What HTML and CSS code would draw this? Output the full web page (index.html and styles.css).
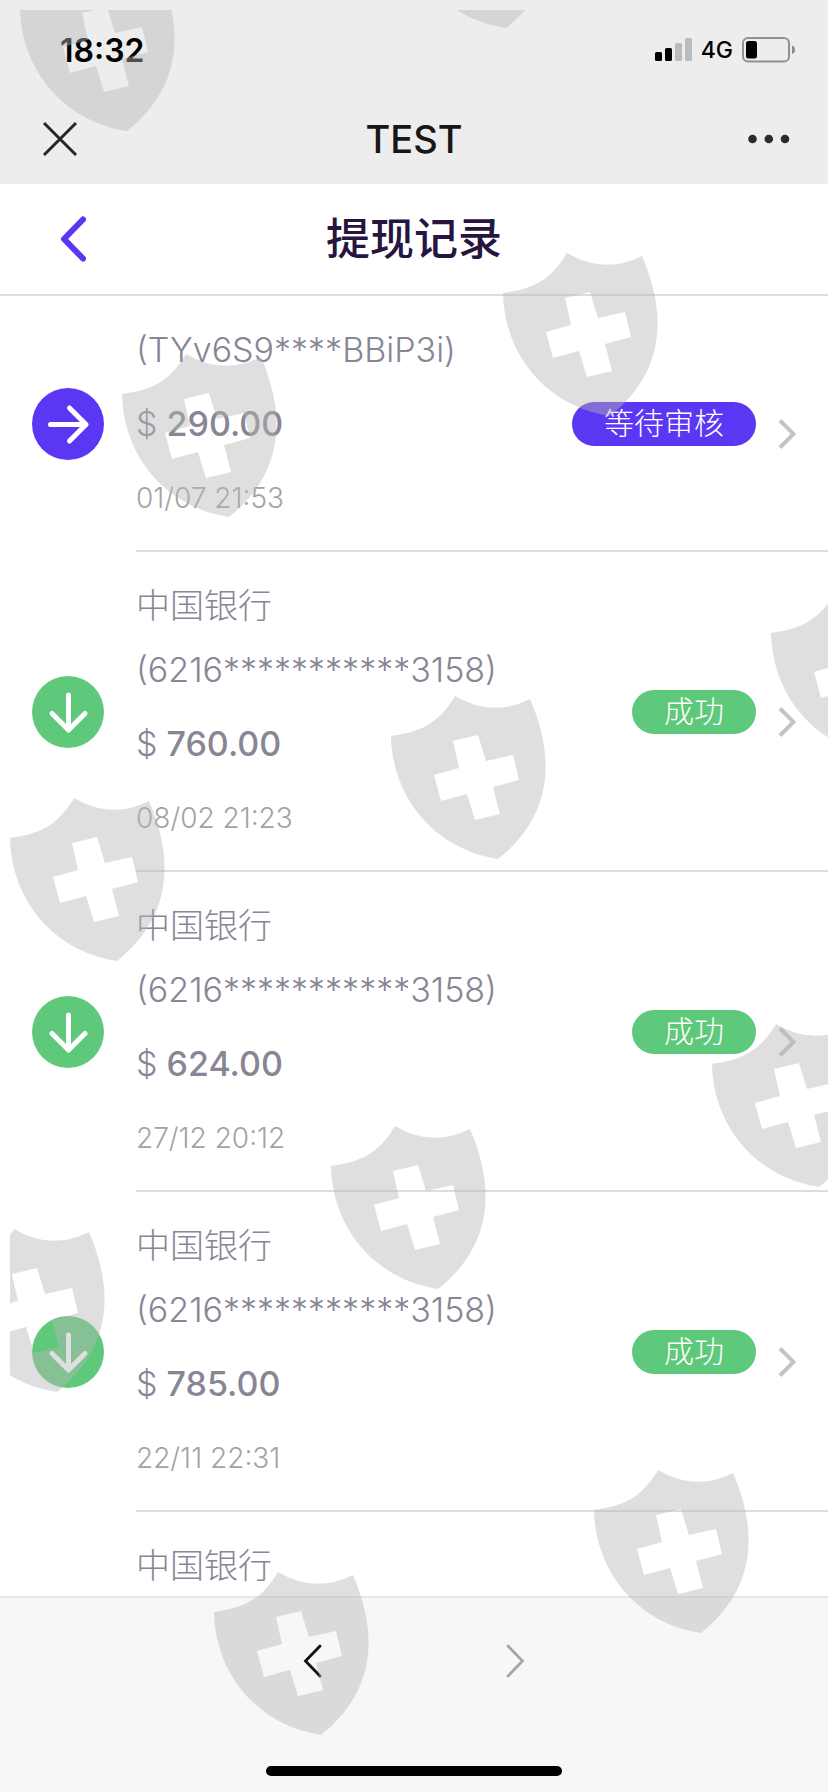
FILE: index.html
```html
<!DOCTYPE html>
<html lang="zh-CN">
<head>
<meta charset="utf-8">
<meta name="viewport" content="width=device-width, initial-scale=1">
<title>提现记录</title>
<link rel="stylesheet" href="styles.css">
</head>
<body>
<div class="screen">
  <header class="shell">
    <div class="status">
      <time class="clock">18:32</time>
      <div class="indicators">
        <svg width="37" height="24" viewBox="0 0 37 24" aria-hidden="true">
          <rect x="0" y="14" width="7" height="9" rx="1.5"/>
          <rect x="10" y="10" width="7" height="13" rx="1.5"/>
          <rect x="20" y="5" width="7" height="18" rx="1.5" fill="#bbb"/>
          <rect x="30" y="0" width="7" height="23" rx="1.5" fill="#bbb"/>
        </svg>
        <span class="network">4G</span>
        <svg width="54" height="26" viewBox="0 0 54 26" aria-hidden="true">
          <rect x="1" y="1" width="46" height="23.500" rx="5" fill="none" stroke="#919191" stroke-width="2"/>
          <rect x="4" y="4" width="11" height="17.500" rx="2.500"/>
          <path d="M50 8.500q3 1 3 4.200t-3 4.200z" fill="#8b8b8b"/>
        </svg>
      </div>
    </div>
    <div class="titlebar">
      <button class="icon-button" type="button" aria-label="关闭">
        <svg width="36" height="36" viewBox="0 0 36 36"><path d="M2 2l32 32M34 2L2 34" stroke="#262626" stroke-width="3" fill="none"/></svg>
      </button>
      <div class="app-name">TEST</div>
      <button class="icon-button" type="button" aria-label="更多">
        <svg width="42" height="10" viewBox="0 0 42 10" fill="#2b2b2b"><circle cx="4.500" cy="5" r="4.300"/><circle cx="20.800" cy="5" r="4.300"/><circle cx="37" cy="5" r="4.300"/></svg>
      </button>
    </div>
  </header>

  <div class="page-head">
    <button class="icon-button back" type="button" aria-label="返回">
      <svg width="26" height="46" viewBox="0 0 26 46"><path d="M23 3.500L4 23l19 19.500" fill="none" stroke="#5b37f3" stroke-width="6" stroke-linecap="round" stroke-linejoin="round"/></svg>
    </button>
    <h1 class="page-title">提现记录</h1>
  </div>

  <ul class="records">
    <li><a class="record" href="#">
      <span class="badge-icon pending"><svg width="72" height="72" viewBox="0 0 72 72"><path d="M18.500 36.500H54M37.500 20L54 36.500 37.500 53"/></svg></span>
      <span class="body">
        <span class="info">
          <span class="name"><span>(TYv6S9****BBiP3i)</span></span>
          <span class="amount"><span class="unit">$</span> 290.00</span>
          <time class="date">01/07 21:53</time>
        </span>
        <span class="tag pending">等待审核</span>
        <svg class="chevron" width="18" height="30" viewBox="0 0 18 30"><path d="M2 1.500L15.500 15 2 28.500"/></svg>
      </span>
    </a></li>
    <li><a class="record" href="#">
      <span class="badge-icon done"><svg width="72" height="72" viewBox="0 0 72 72"><path d="M36.500 19V54M20 37.500L36.500 54 53 37.500"/></svg></span>
      <span class="body">
        <span class="info">
          <span class="name"><span>中国银行</span><span>(6216***********3158)</span></span>
          <span class="amount"><span class="unit">$</span> 760.00</span>
          <time class="date">08/02 21:23</time>
        </span>
        <span class="tag done">成功</span>
        <svg class="chevron" width="18" height="30" viewBox="0 0 18 30"><path d="M2 1.500L15.500 15 2 28.500"/></svg>
      </span>
    </a></li>
    <li><a class="record" href="#">
      <span class="badge-icon done"><svg width="72" height="72" viewBox="0 0 72 72"><path d="M36.500 19V54M20 37.500L36.500 54 53 37.500"/></svg></span>
      <span class="body">
        <span class="info">
          <span class="name"><span>中国银行</span><span>(6216***********3158)</span></span>
          <span class="amount"><span class="unit">$</span> 624.00</span>
          <time class="date">27/12 20:12</time>
        </span>
        <span class="tag done">成功</span>
        <svg class="chevron" width="18" height="30" viewBox="0 0 18 30"><path d="M2 1.500L15.500 15 2 28.500"/></svg>
      </span>
    </a></li>
    <li><a class="record" href="#">
      <span class="badge-icon done"><svg width="72" height="72" viewBox="0 0 72 72"><path d="M36.500 19V54M20 37.500L36.500 54 53 37.500"/></svg></span>
      <span class="body">
        <span class="info">
          <span class="name"><span>中国银行</span><span>(6216***********3158)</span></span>
          <span class="amount"><span class="unit">$</span> 785.00</span>
          <time class="date">22/11 22:31</time>
        </span>
        <span class="tag done">成功</span>
        <svg class="chevron" width="18" height="30" viewBox="0 0 18 30"><path d="M2 1.500L15.500 15 2 28.500"/></svg>
      </span>
    </a></li>
    <li><a class="record" href="#">
      <span class="badge-icon"></span>
      <span class="body">
        <span class="info"><span class="name"><span>中国银行</span></span></span>
      </span>
    </a></li>
  </ul>

  <footer class="browser-bar">
    <nav class="history">
      <button class="icon-button" type="button" aria-label="后退">
        <svg width="20" height="36" viewBox="0 0 20 36"><path d="M17 3L2.500 18 17 33" fill="none" stroke="#111" stroke-width="2.800" stroke-linecap="round"/></svg>
      </button>
      <button class="icon-button" type="button" aria-label="前进">
        <svg width="20" height="36" viewBox="0 0 20 36"><path d="M3 3l14.500 15L3 33" fill="none" stroke="#a6a6a6" stroke-width="2.800" stroke-linecap="round"/></svg>
      </button>
    </nav>
    <div class="home-indicator"></div>
  </footer>

  <svg class="shields" aria-hidden="true">
    <defs>
      <path id="shield" fill-rule="evenodd" d="M0 40C28 36 47 29 64 0Q101 22 139 3C165 63 161 120 107 163C42 153 1 100 0 40ZM62 45L68 72L43 79L50 105L76 98L84 124L109 118L102 91L128 84L122 59L95 65L87 39Z"/>
    </defs>
    <use href="#shield" x="10" y="-42"/>
    <use href="#shield" x="389" y="-145"/>
    <use href="#shield" x="493" y="243"/>
    <use href="#shield" x="112" y="344"/>
    <use href="#shield" x="761" y="583"/>
    <use href="#shield" x="381" y="686"/>
    <use href="#shield" x="0" y="788"/>
    <use href="#shield" x="702" y="1014"/>
    <use href="#shield" x="321" y="1116"/>
    <use href="#shield" x="-60" y="1219"/>
    <use href="#shield" x="584" y="1460"/>
    <use href="#shield" x="204" y="1562"/>
  </svg>
</div>
</body>
</html>
```
FILE: styles.css
```css
* {
  box-sizing: border-box;
}

body {
  margin: 0;
  font-family: Inter, "Noto Sans CJK SC", sans-serif;
  background: #fff;
}

.screen {
  position: relative;
  display: flex;
  flex-direction: column;
  height: 100vh;
  overflow: hidden;
}

.icon-button {
  display: flex;
  align-items: center;
  justify-content: center;
  min-height: 44px;
  padding: 0;
  border: 0;
  background: none;
}

.shell {
  background: #ededed;
}

.status {
  display: flex;
  align-items: center;
  justify-content: space-between;
  height: 96px;
  padding: 4px 32px 0 60px;
}

.clock {
  font-size: 32px;
  font-weight: 600;
}

.indicators {
  display: flex;
  align-items: center;
  gap: 9px;
}

.network {
  font-size: 23px;
  font-weight: 500;
}

.titlebar {
  display: grid;
  grid-template-columns: 1fr auto 1fr;
  align-items: center;
  height: 88px;
  padding: 0 38px 2px;
}

.titlebar .icon-button:first-child {
  justify-self: start;
  width: 44px;
}

.titlebar .icon-button:last-child {
  justify-self: end;
}

.app-name {
  font-size: 38px;
  font-weight: 500;
  color: #171717;
}

.page-head {
  display: grid;
  grid-template-columns: 1fr auto 1fr;
  align-items: center;
  height: 112px;
  padding: 0 60px;
  border-bottom: 2px solid #dcdbe9;
}

.back {
  justify-self: start;
}

.page-title {
  margin: 0;
  font-size: 44px;
  font-weight: 500;
  line-height: 64px;
  color: #26163f;
}

.records {
  flex: 1;
  min-height: 0;
  margin: 0;
  padding: 0;
  overflow: hidden;
  list-style: none;
}

.record {
  display: flex;
  align-items: center;
  gap: 32px;
  padding-left: 32px;
  color: #888594;
  text-decoration: none;
}

.badge-icon {
  flex: none;
  width: 72px;
  height: 72px;
  border-radius: 50%;
}

.badge-icon svg {
  display: block;
  fill: none;
  stroke: #fff;
  stroke-width: 5;
  stroke-linecap: round;
  stroke-linejoin: round;
}

.pending {
  background: #5b37f3;
}

.done {
  background: #5fc97b;
}

.body {
  flex: 1;
  display: flex;
  align-items: center;
  padding: 22px 32px 20px 0;
  border-bottom: 2px solid #dcdbe6;
}

.info {
  flex: 1;
  display: flex;
  flex-direction: column;
  gap: 10px;
  line-height: 64px;
}

.name {
  display: flex;
  flex-direction: column;
  font-size: 34px;
  font-weight: 300;
}

.amount {
  font-size: 34px;
  font-weight: 500;
}

.unit {
  font-weight: 300;
}

.date {
  font-size: 28px;
  font-weight: 300;
  color: #a3a3a3;
}

.tag {
  padding: 0 32px 2px;
  border-radius: 22px;
  font-size: 30px;
  font-weight: 300;
  line-height: 42px;
  color: #fff;
}

.chevron {
  margin: 20px 0 0 22px;
  fill: none;
  stroke: #c4c4c4;
  stroke-width: 4;
}

.browser-bar {
  display: flex;
  flex-direction: column;
  align-items: center;
  height: 196px;
  border-top: 2px solid #e6e6e6;
  background: #f7f7f7;
}

.history {
  display: flex;
  align-items: center;
  gap: 142px;
  height: 126px;
}

.history .icon-button {
  width: 60px;
}

.home-indicator {
  width: 296px;
  height: 10px;
  margin-top: 42px;
  border-radius: 5px;
  background: #000;
}

.shields {
  position: absolute;
  top: 10px;
  left: 10px;
  width: calc(100% - 10px);
  height: calc(100% - 10px);
  overflow: hidden;
  fill: rgba(182, 182, 182, 0.44);
  pointer-events: none;
}
```
